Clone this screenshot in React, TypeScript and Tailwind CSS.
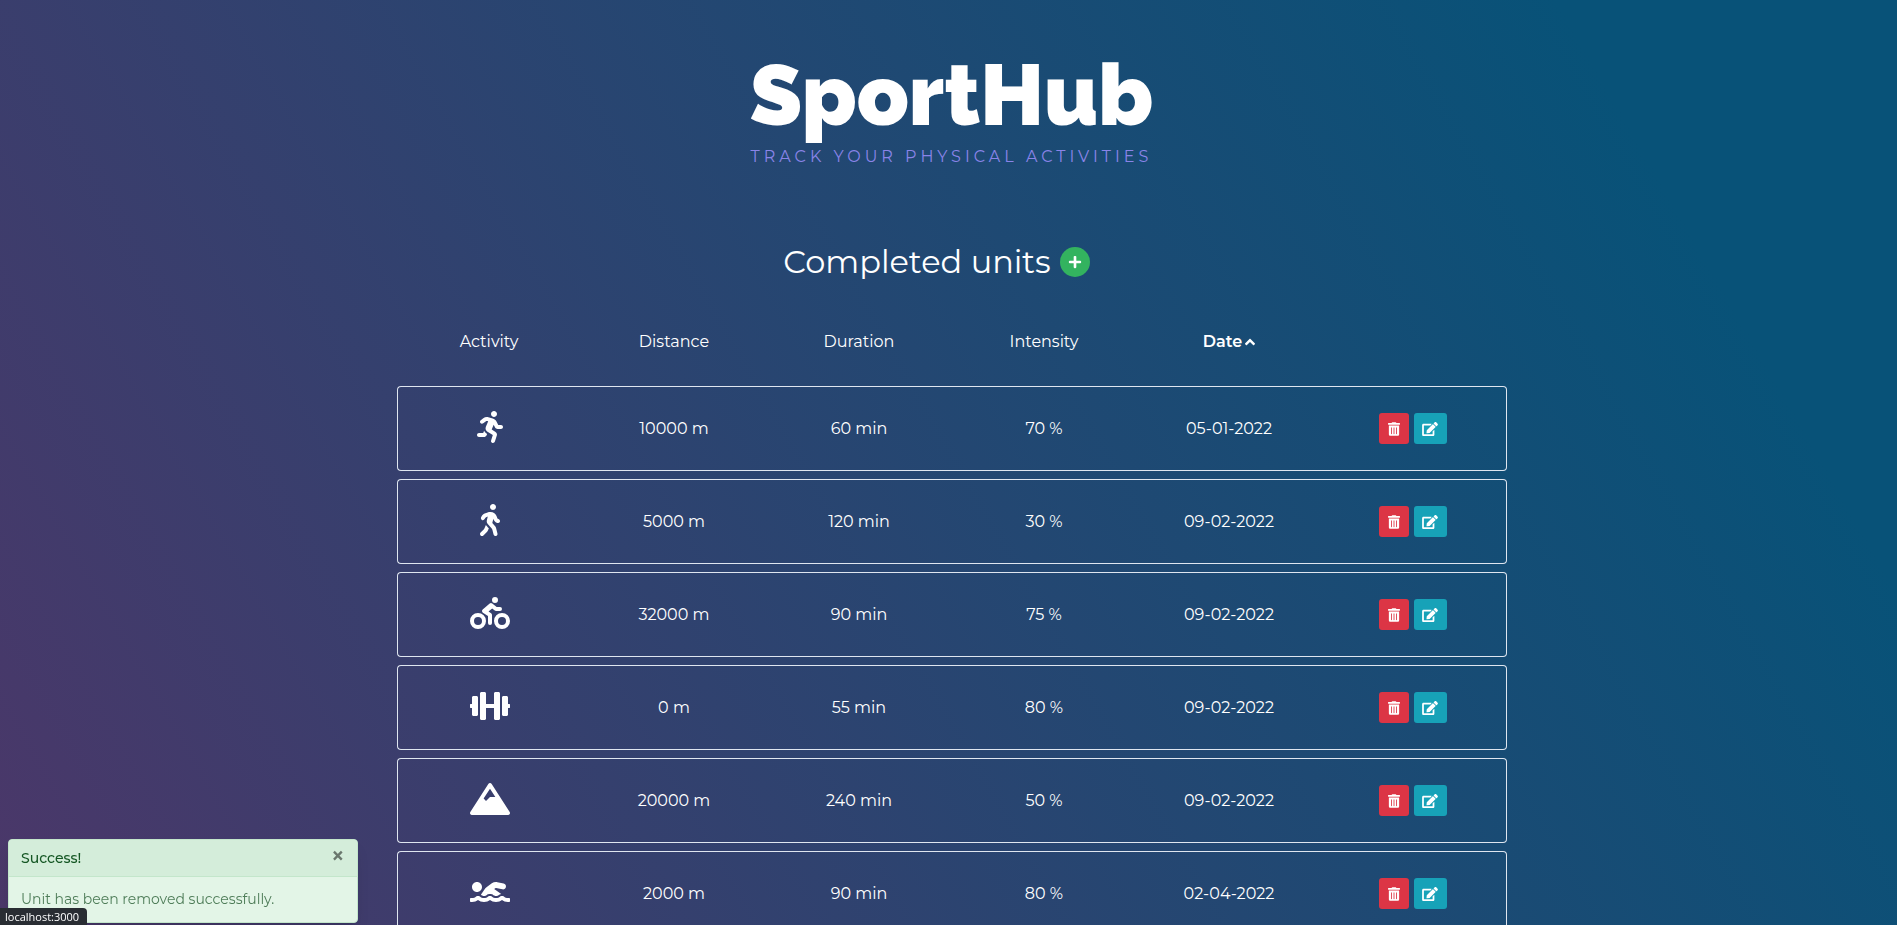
import {
  FaAngleUp,
  FaBiking,
  FaDumbbell,
  FaEdit,
  FaMountain,
  FaPlus,
  FaRunning,
  FaSwimmer,
  FaTrashAlt,
  FaWalking,
} from "react-icons/fa";
import type { IconType } from "react-icons";

type Unit = { icon: IconType; name: string; distance: number; duration: number; intensity: number; date: string };

const units: Unit[] = [
  { icon: FaRunning, name: "Running", distance: 10000, duration: 60, intensity: 70, date: "05-01-2022" },
  { icon: FaWalking, name: "Walking", distance: 5000, duration: 120, intensity: 30, date: "09-02-2022" },
  { icon: FaBiking, name: "Cycling", distance: 32000, duration: 90, intensity: 75, date: "09-02-2022" },
  { icon: FaDumbbell, name: "Gym", distance: 0, duration: 55, intensity: 80, date: "09-02-2022" },
  { icon: FaMountain, name: "Hiking", distance: 20000, duration: 240, intensity: 50, date: "09-02-2022" },
  { icon: FaSwimmer, name: "Swimming", distance: 2000, duration: 90, intensity: 80, date: "02-04-2022" },
];

function UnitRow({ unit }: { unit: Unit }) {
  const Icon = unit.icon;
  return (
    <tr className="h-[85px] [&>td]:border-y [&>td]:border-[#dfe6f0]">
      <td className="rounded-l border-l pb-1">
        <Icon className="mx-auto h-8 w-10" role="img" aria-label={unit.name} />
      </td>
      <td>{unit.distance} m</td>
      <td>{unit.duration} min</td>
      <td>{unit.intensity} %</td>
      <td>{unit.date}</td>
      <td className="rounded-r border-r pr-[2px]">
        <div className="flex justify-center gap-[5px]">
          <button aria-label="Delete" className="flex h-[31px] w-[30px] items-center justify-center rounded-[3px] bg-[#dc3545]">
            <FaTrashAlt className="h-[14px] w-3" />
          </button>
          <button aria-label="Edit" className="flex h-[31px] w-[33px] items-center justify-center rounded-[3px] bg-[#17a2b8]">
            <FaEdit className="h-[14px] w-4" />
          </button>
        </div>
      </td>
    </tr>
  );
}

export default function App() {
  return (
    <div className="h-screen overflow-hidden bg-[linear-gradient(60deg,#4b3769_0%,#085278_86%)] pl-[6px] font-[Montserrat,Inter,sans-serif] text-base text-white">
      <main className="mx-auto flex max-w-[1110px] flex-col items-center">
        <header className="flex flex-col items-center pt-[45px]">
          <h1 className="font-[Raleway,Montserrat,Inter,sans-serif] text-[85px] leading-[100px] font-black">SportHub</h1>
          <p className="text-base leading-6 tracking-[4px] text-[#8a84e8] uppercase">Track your physical activities</p>
        </header>
        <div className="mt-[73px] mr-[30px] flex items-center gap-[9px]">
          <h2 className="text-[32px] leading-10 font-normal">Completed units</h2>
          <button aria-label="Add unit" className="flex h-[30px] w-[30px] items-center justify-center rounded-full bg-[#33b35f]">
            <FaPlus className="h-[14px] w-[14px]" />
          </button>
        </div>
        <table className="mt-10 w-full table-fixed border-separate border-spacing-x-0 border-spacing-y-2 text-center">
          <thead>
            <tr className="h-12 align-top leading-6">
              <th className="font-normal">Activity</th>
              <th className="font-normal">Distance</th>
              <th className="font-normal">Duration</th>
              <th className="font-normal">Intensity</th>
              <th className="font-semibold">
                <button className="inline-flex items-center gap-[3px]">
                  Date <FaAngleUp className="h-4 w-[10px]" />
                </button>
              </th>
              <td />
            </tr>
          </thead>
          <tbody>
            {units.map((unit) => (
              <UnitRow key={unit.name} unit={unit} />
            ))}
          </tbody>
        </table>
      </main>

      <div role="alert" className="fixed bottom-[2px] left-2 w-[350px] overflow-hidden rounded border border-[#c3e6cb] bg-[#e3f5e7] text-sm text-[#155724] shadow-lg">
        <div className="flex h-[37px] items-start justify-between border-b border-[#c3e6cb] bg-[#d4edda] px-3">
          <strong className="pt-2 leading-5 font-medium">Success!</strong>
          <button aria-label="Close" className="text-2xl leading-8 font-semibold text-[#6a776d]">×</button>
        </div>
        <p className="h-[45px] px-3 pt-3 leading-5 text-[#4f7d59]">Unit has been removed successfully.</p>
      </div>

      <div className="fixed bottom-0 left-0 w-[87px] rounded-tr bg-[#292d33] pl-[5px] font-['Open_Sans',sans-serif] text-[11px] leading-[17px] font-medium">localhost:3000</div>
    </div>
  );
}
